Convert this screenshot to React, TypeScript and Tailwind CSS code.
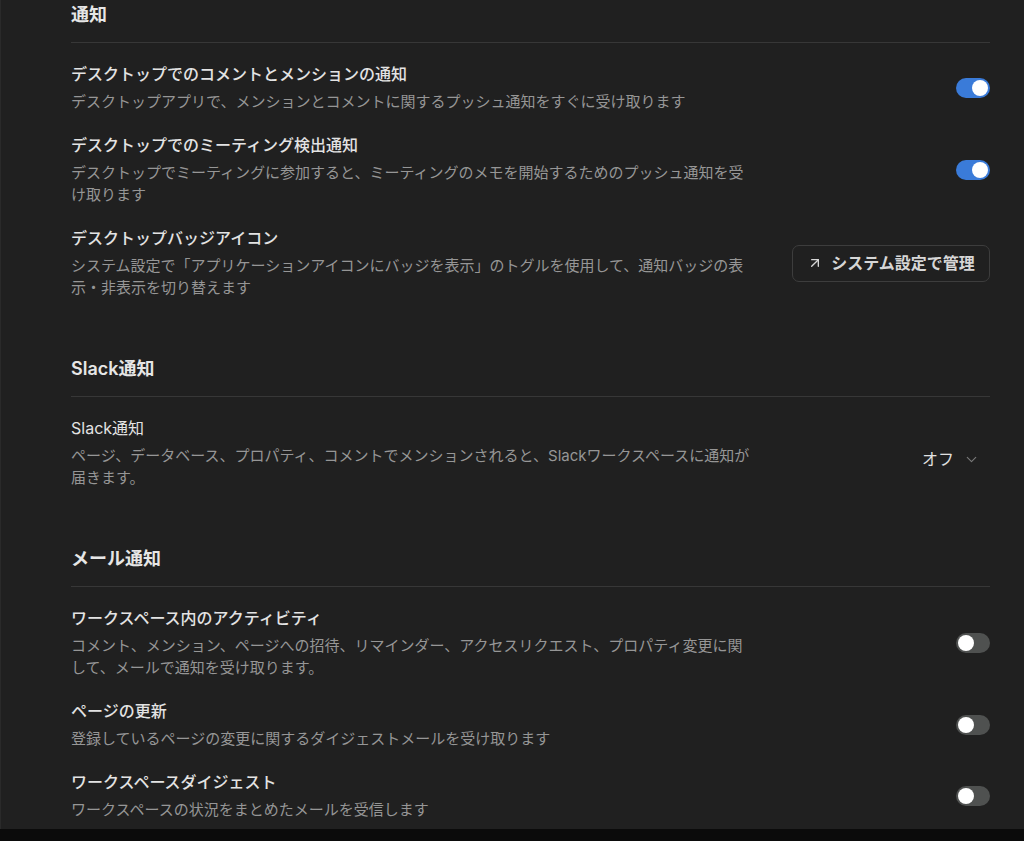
import type { FC, ReactNode } from 'react';
import { ArrowUpRight, ChevronDown } from 'lucide-react';

const font = { fontFamily: '"Inter", "Noto Sans CJK JP", sans-serif' };

const Toggle: FC<{ on?: boolean }> = ({ on }) => (
  <div
    className={`flex h-[20px] w-[34px] shrink-0 items-center rounded-full p-[2px] ${
      on ? 'justify-end bg-[#3a7bd9]' : 'justify-start bg-[#4f5150]'
    }`}
  >
    <div className="h-[16px] w-[16px] rounded-full bg-white" />
  </div>
);

const Section: FC<{ title: string; first?: boolean; children: ReactNode }> = ({ title, first, children }) => (
  <section className={first ? '' : 'mt-[57px]'}>
    <h2 className="border-b border-[#373737] pb-[14px] text-[18px] font-semibold leading-[26px] text-[#e6e6e6]">
      {title}
    </h2>
    <div className="mt-[20px] flex flex-col gap-[21px]">{children}</div>
  </section>
);

const Row: FC<{ title: string; desc: string; light?: boolean; control: ReactNode }> = ({
  title,
  desc,
  light,
  control
}) => (
  <div className="flex items-center justify-between">
    <div className="max-w-[684px]">
      <div
        className={`text-[16px] leading-[22px] text-[#e3e3e3] ${light ? 'font-normal' : 'font-medium'}`}
      >
        {title}
      </div>
      <div className="mt-[6px] text-[15px] leading-[22px] text-[#969696]">{desc}</div>
    </div>
    {control}
  </div>
);

export default function App() {
  return (
    <div className="flex h-[841px] w-[1024px] flex-col overflow-hidden bg-[#0b0b0b]" style={font}>
      <div className="h-[829px] overflow-hidden border-l border-[#2a2a2a] bg-[#202020] pl-[70px] pr-[34px] pt-[2px]">
        <Section title="通知" first>
          <Row
            title="デスクトップでのコメントとメンションの通知"
            desc="デスクトップアプリで、メンションとコメントに関するプッシュ通知をすぐに受け取ります"
            control={<Toggle on />}
          />
          <Row
            title="デスクトップでのミーティング検出通知"
            desc="デスクトップでミーティングに参加すると、ミーティングのメモを開始するためのプッシュ通知を受け取ります"
            control={<Toggle on />}
          />
          <Row
            title="デスクトップバッジアイコン"
            desc="システム設定で「アプリケーションアイコンにバッジを表示」のトグルを使用して、通知バッジの表示・非表示を切り替えます"
            control={
              <button className="flex h-[37px] w-[198px] items-center justify-center gap-[8px] rounded-[7px] border border-[#3d3d3d] text-[16px] font-semibold text-[#d6d6d6]">
                <ArrowUpRight size={16} strokeWidth={2} />
                システム設定で管理
              </button>
            }
          />
        </Section>

        <Section title="Slack通知">
          <Row
            title="Slack通知"
            light
            desc="ページ、データベース、プロパティ、コメントでメンションされると、Slackワークスペースに通知が届きます。"
            control={
              <div className="mr-[10px] mt-[12px] flex items-center gap-[9px] text-[16px] text-[#e0e0e0]">
                オフ
                <ChevronDown size={17} strokeWidth={1.6} className="text-[#7a7a7a]" />
              </div>
            }
          />
        </Section>

        <Section title="メール通知">
          <Row
            title="ワークスペース内のアクティビティ"
            desc="コメント、メンション、ページへの招待、リマインダー、アクセスリクエスト、プロパティ変更に関して、メールで通知を受け取ります。"
            control={<Toggle />}
          />
          <Row
            title="ページの更新"
            desc="登録しているページの変更に関するダイジェストメールを受け取ります"
            control={<Toggle />}
          />
          <Row
            title="ワークスペースダイジェスト"
            desc="ワークスペースの状況をまとめたメールを受信します"
            control={<Toggle />}
          />
        </Section>
      </div>
    </div>
  );
}
